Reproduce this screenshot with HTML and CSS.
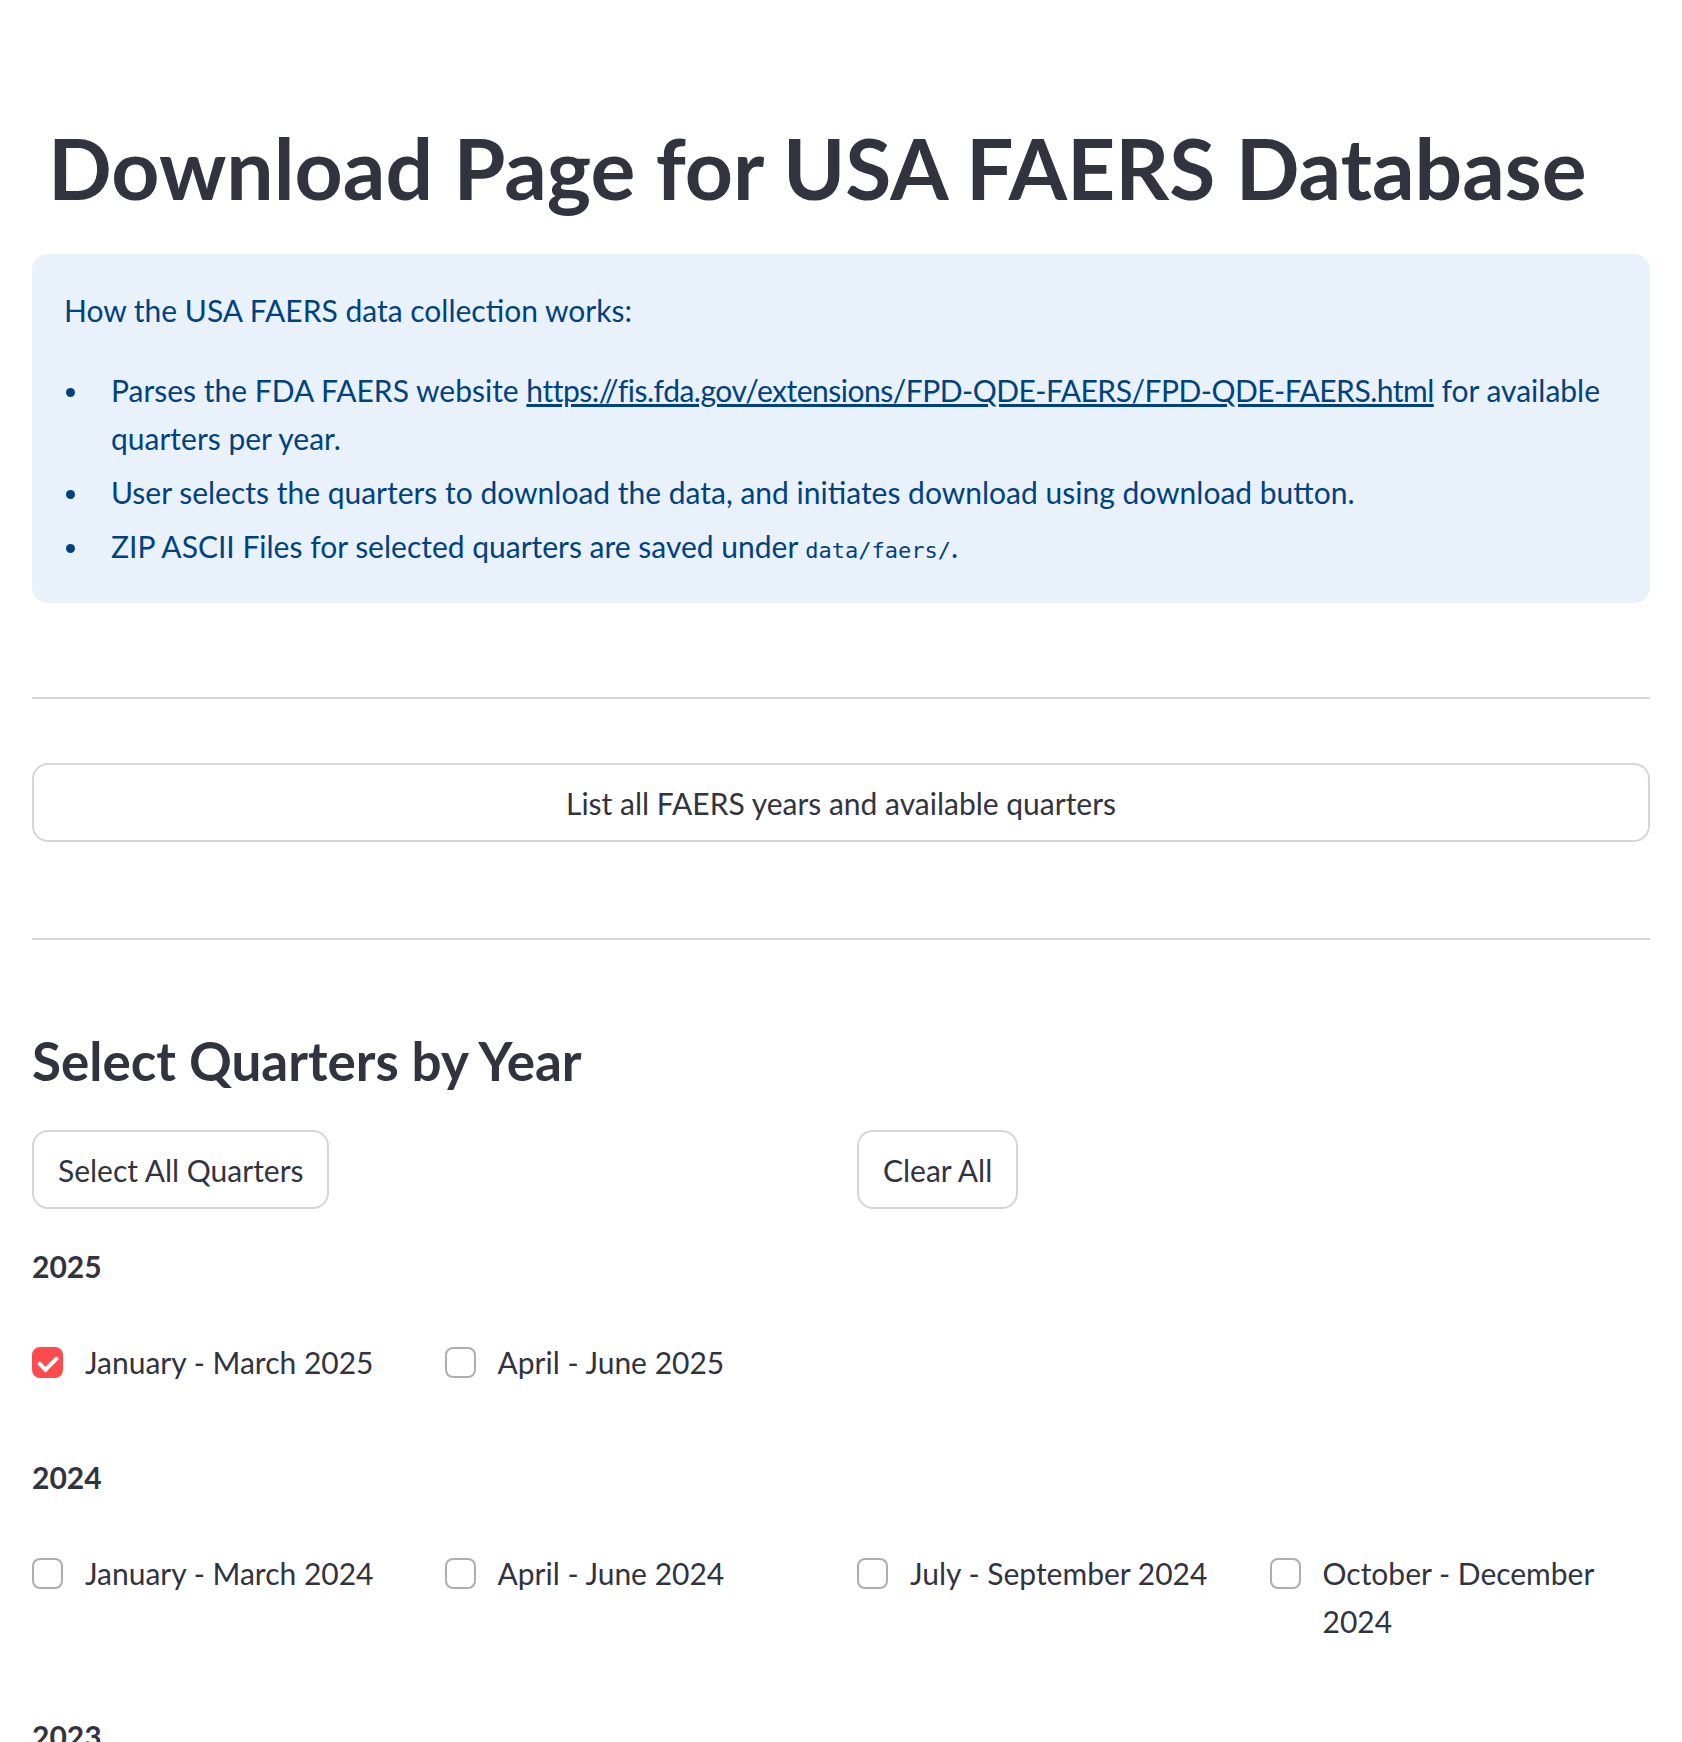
FILE: index.html
```html
<!DOCTYPE html>
<html lang="en">
<head>
  <meta charset="UTF-8" />
  <meta name="viewport" content="width=device-width, initial-scale=1" />
  <title>FAERS Download</title>
  <link rel="stylesheet" href="styles.css">
</head>
<body>

<div class="main">
  <h1 class="title">Download Page for USA FAERS Database</h1>

  <div class="info">
    <p>How the USA FAERS data collection works:</p>
    <ul>
      <li><span>Parses the FDA FAERS website <a href="#">https://fis.fda.gov/extensions/FPD-QDE-FAERS/FPD-QDE-FAERS.html</a> for available quarters per year.</span></li>
      <li><span>User selects the quarters to download the data, and initiates download using download button.</span></li>
      <li><span>ZIP ASCII Files for selected quarters are saved under <code>data/faers/</code>.</span></li>
    </ul>
  </div>

  <hr class="divider first">

  <button class="btn wide">List all FAERS years and available quarters</button>

  <hr class="divider second">

  <h3 class="section">Select Quarters by Year</h3>

  <div class="cols two">
    <div><button class="btn">Select All Quarters</button></div>
    <div><button class="btn">Clear All</button></div>
  </div>

  <div class="year">2025</div>
  <div class="cols four">
    <label class="check"><span class="box on"></span><span>January - March 2025</span></label>
    <label class="check"><span class="box"></span><span>April - June 2025</span></label>
    <div></div>
    <div></div>
  </div>

  <div class="year">2024</div>
  <div class="cols four">
    <label class="check"><span class="box"></span><span>January - March 2024</span></label>
    <label class="check"><span class="box"></span><span>April - June 2024</span></label>
    <label class="check"><span class="box"></span><span>July - September 2024</span></label>
    <label class="check"><span class="box"></span><span>October - December 2024</span></label>
  </div>

  <div class="year">2023</div>
  <div class="cols four">
    <label class="check"><span class="box"></span><span>January - March 2023</span></label>
    <label class="check"><span class="box"></span><span>April - June 2023</span></label>
    <label class="check"><span class="box"></span><span>July - September 2023</span></label>
    <label class="check"><span class="box"></span><span>October - December 2023</span></label>
  </div>
</div>

</body>
</html>
```

FILE: styles.css
```css
body {
  margin: 0;
  background: #fff;
  color: #31333f;
  font-family: Lato, "Open Sans", sans-serif;
  font-size: 30px;
  line-height: 48px;
}
.main {
  padding: 118px 32px 80px 32px;
}
.title {
  margin: 0;
  padding-left: 16px;
  font-size: 84px;
  line-height: 100px;
  font-weight: 700;
}
.info {
  margin-top: 36px;
  background: #e9f1fb;
  color: #004280;
  border-radius: 16px;
  padding: 32px 32px 33px 32px;
}
.info p {
  margin: 0 0 32px 0;
}
.info ul {
  list-style: none;
  margin: 0;
  padding: 0;
}
.info li {
  display: flex;
}
.info li + li {
  margin-top: 6px;
}
.info li::before {
  content: "";
  flex: none;
  width: 9px;
  height: 9px;
  border-radius: 50%;
  background: currentColor;
  margin: 22px 36px 0 2px;
}
.info a {
  color: inherit;
  letter-spacing: -0.5px;
}
.info code {
  font-family: "DejaVu Sans Mono", "Liberation Mono", monospace;
  font-size: 22px;
  line-height: 1;
}
.divider {
  border: none;
  height: 2px;
  background: #d6d6d9;
  margin: 0;
}
.divider.first {
  margin-top: 94px;
}
.divider.second {
  margin-top: 96px;
}
.btn {
  height: 79px;
  box-sizing: border-box;
  padding: 0 24px;
  background: #fff;
  border: 2px solid #d6d6d9;
  border-radius: 16px;
  color: #31333f;
  font-family: inherit;
  font-size: 30px;
  cursor: pointer;
}
.btn.wide {
  display: block;
  width: 100%;
  margin-top: 64px;
}
.section {
  margin: 91px 0 0 0;
  font-size: 53px;
  line-height: 60px;
  font-weight: 700;
}
.cols {
  display: grid;
  column-gap: 32px;
}
.cols.two {
  grid-template-columns: 1fr 1fr;
  margin-top: 39px;
}
.cols.four {
  grid-template-columns: repeat(4, 1fr);
  margin-top: 48px;
}
.year {
  font-weight: 700;
  margin-top: 67px;
}
.cols.two + .year {
  margin-top: 33px;
}
.check {
  display: flex;
  align-items: flex-start;
}
.box {
  flex: none;
  width: 31px;
  height: 31px;
  box-sizing: border-box;
  margin: 9px 22px 0 0;
  border: 2px solid #adadb2;
  border-radius: 8px;
  background: #fff;
}
.box.on {
  border-color: #ff4b4b;
  background: #ff4b4b;
  position: relative;
}
.box.on::after {
  content: "";
  position: absolute;
  left: 8px;
  top: 3px;
  width: 8px;
  height: 15px;
  border: solid #fff;
  border-width: 0 4px 4px 0;
  transform: rotate(45deg);
}
```
